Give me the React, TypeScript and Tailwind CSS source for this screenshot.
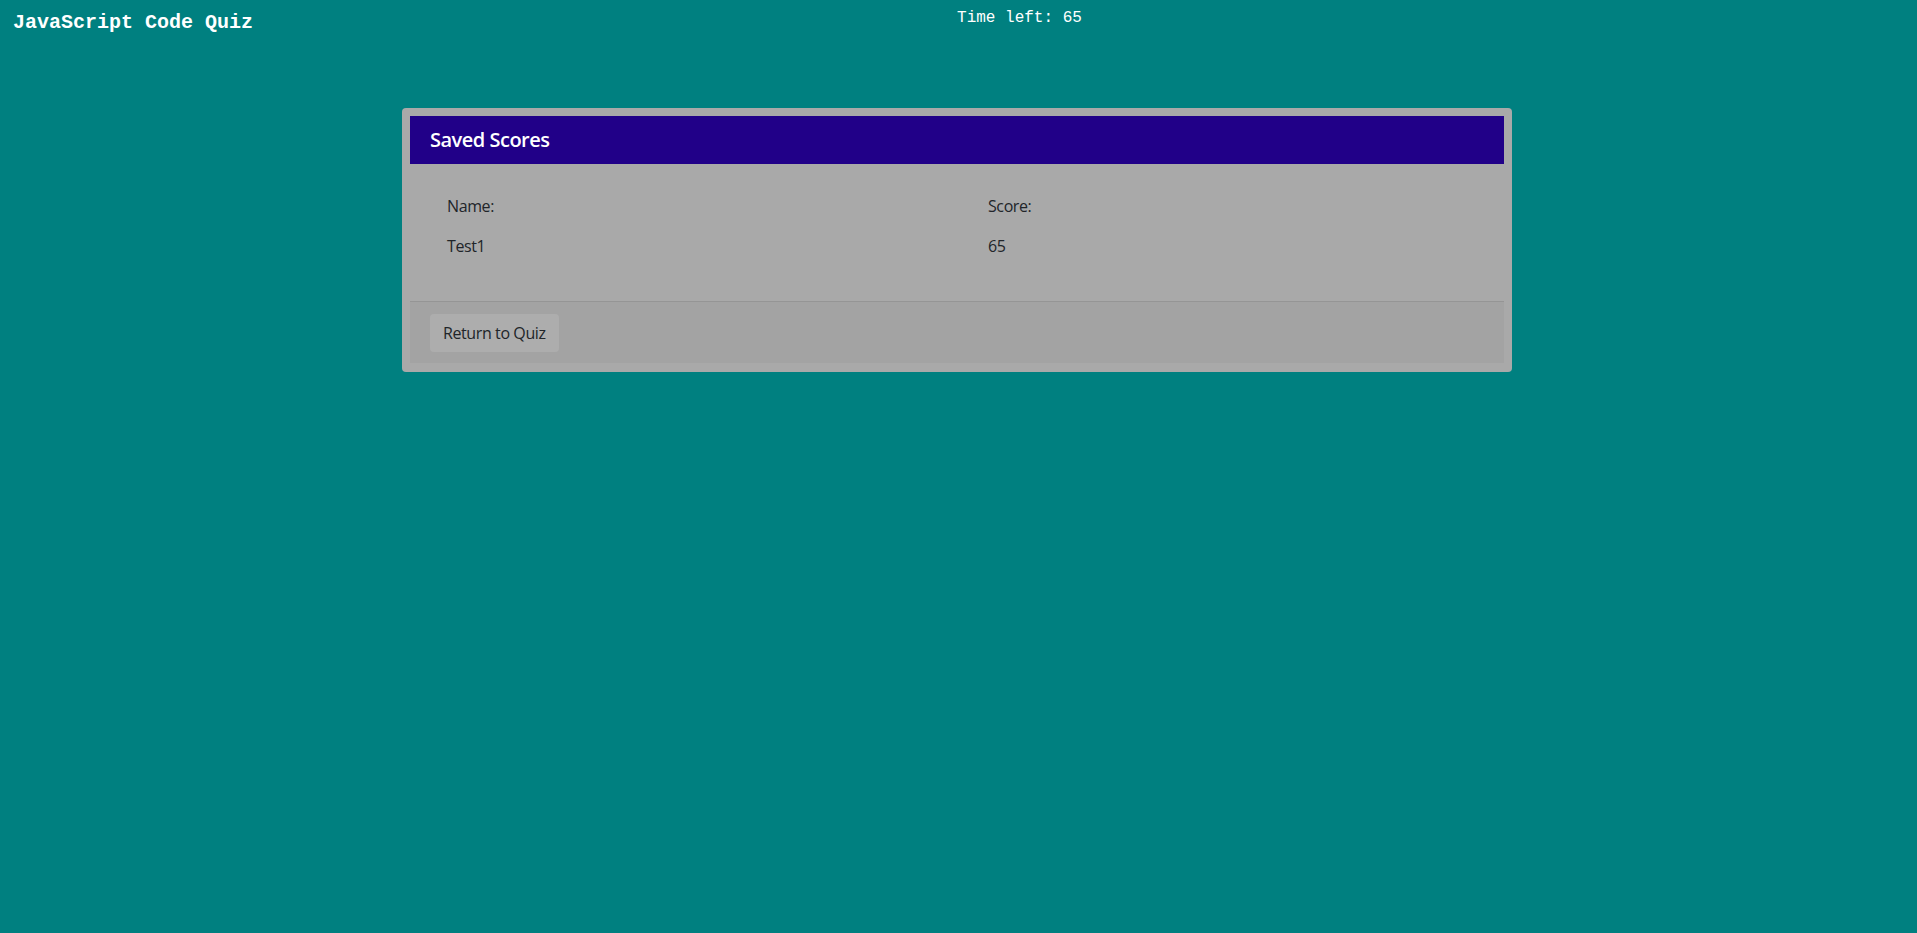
export default function App() {
  const scores = [{ name: 'Test1', score: 65 }]

  return (
    <div className="min-h-[933px] bg-[#008080] font-['Open_Sans',sans-serif]">
      <div className="flex items-start font-['Liberation_Mono',monospace] text-white">
        <h1 className="pl-[13px] pt-[11px] text-[20px] font-bold leading-[24px]">
          JavaScript Code Quiz
        </h1>
        <div className="ml-[704px] pt-[8px] text-[16px] leading-[20px]">Time left: 65</div>
      </div>

      <div className="ml-[402px] mt-[73px] w-[1110px] rounded-[4px] bg-[#a9a9a9] p-[8px] pb-[9px]">
        <div className="flex h-[48px] items-center bg-[#210088] px-[20px] text-[20px] font-semibold tracking-[-0.5px] text-white">
          Saved Scores
        </div>

        <div className="pb-[43px] pt-[30px] pl-[37px] text-[16px] leading-[24px] tracking-[-0.4px] text-[#212529]">
          <div className="grid grid-cols-[541px_1fr] gap-y-[16px]">
            <div>Name:</div>
            <div>Score:</div>
            {scores.map((s) => (
              <div key={s.name} className="contents">
                <div>{s.name}</div>
                <div>{s.score}</div>
              </div>
            ))}
          </div>
        </div>

        <div className="border-t border-[#959595] bg-[#a3a3a3] px-[20px] pb-[11px] pt-[12px]">
          <button className="h-[38px] rounded-[4px] bg-[#adadad] px-[13px] text-[16px] tracking-[-0.4px] text-[#212529]">
            Return to Quiz
          </button>
        </div>
      </div>
    </div>
  )
}
